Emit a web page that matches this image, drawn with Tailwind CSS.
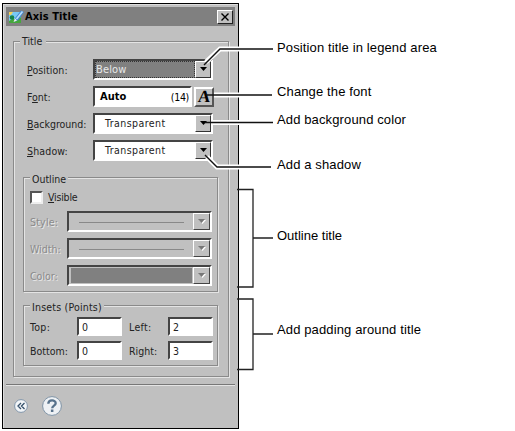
<!DOCTYPE html>
<html lang="en">
<head>
<meta charset="utf-8">
<title>Axis Title</title>
<script src="https://cdn.jsdelivr.net/npm/@tailwindcss/browser@4"></script>
</head>
<body class="bg-white">
<div class="relative flex h-[431px] w-[515px] overflow-hidden pt-[3px] pl-[2px]">
  <!-- dialog -->
  <section class="flex h-[426px] w-[237px] flex-col border border-black bg-[#c0c0c0] px-[3px] pt-[3px] font-['DejaVu_Sans_Condensed','DejaVu_Sans',sans-serif] text-[10.5px] leading-[14px] text-[#222] shadow-[inset_1px_1px_0_#ddd]">
    <header class="flex h-[19px] shrink-0 items-center bg-[#808080] pr-[2px] pl-[2px]">
      <svg class="h-4 w-4" viewBox="0 0 16 16">
        <rect x="1" y="3" width="12" height="11" fill="#79c8f5"/>
        <path d="M1 12 5 9.500 8 11 13 8V14H1z" fill="#45a83c"/>
        <circle cx="4" cy="8.500" r="2.300" fill="#168348"/><path d="M1 3h4l-2 3H1z" fill="#f3d35b"/>
        <path d="M6 13 7.500 8.500 13 1.500 16 3 10.500 11z" fill="#3f86d2"/><path d="M8.500 10 14.500 2.500" stroke="#b5dcfb" stroke-width="1.800"/><path d="m5.500 13 1.500-3.500 2 2z" fill="#f4f4e8"/>
      </svg>
      <h1 class="ml-[1px] text-[11px] font-bold tracking-[.1px] text-black">Axis Title</h1>
      <button class="ml-auto flex h-[14px] w-[16px] items-center justify-center border border-t-white border-r-[#222] border-b-[#222] border-l-white bg-[#c0c0c0]" aria-label="Close">
        <svg class="h-2 w-2" viewBox="0 0 8 8"><path d="M.5 .5 7.5 7.5M7.5 .5 .5 7.5" stroke="#000" stroke-width="1.4"/></svg>
      </button>
    </header>

    <div class="mt-[15px] ml-[7px] h-[336px] w-[216px] shrink-0 border border-[#8a8a8a] pl-[9px] shadow-[1px_1px_0_#e4e4e4,inset_1px_1px_0_#e4e4e4]">
      <h2 class="-mt-[8px] -ml-[3px] h-[14px] w-[26px] bg-[#c0c0c0] pl-[2px]">Title</h2>
      <div class="mt-[11px] flex flex-col gap-[6px] pl-[4px]">
        <div class="flex h-[21px] items-center">
          <label class="w-[66px] shrink-0 tracking-[.08px]"><u>P</u>osition:</label>
          <div class="flex h-[21px] w-[120px] border-2 border-t-[#444] border-r-white border-b-white border-l-[#444] bg-[#808080]">
            <span class="flex-1 border border-dotted border-[#333] text-[11px] leading-[16px] tracking-[.15px] text-[#e8e8e8]">Below</span>
            <span class="flex w-[16px] items-center justify-center border border-t-white border-r-[#333] border-b-[#333] border-l-white bg-[#c0c0c0] pb-px"><svg class="h-1 w-[7px]" viewBox="0 0 7 4"><path d="M0 0h7L3.5 4z"/></svg></span>
          </div>
        </div>
        <div class="flex h-[21px] items-center">
          <label class="w-[66px] shrink-0">F<u>o</u>nt:</label>
          <div class="flex h-[21px] w-[99px] items-center justify-between border-2 border-t-[#444] border-r-white border-b-white border-l-[#444] bg-white pr-px pl-[5px] text-black"><b class="text-[11px]">Auto</b><span class="tracking-[-.3px]">(14)</span></div>
          <button class="ml-[2px] flex h-[20px] w-[20px] items-center justify-center border-2 border-t-white border-r-[#555] border-b-[#555] border-l-white font-['Liberation_Serif',serif] text-[17px] leading-[16px] font-bold text-black"><span class="-skew-x-6">A</span></button>
        </div>
        <div class="flex h-[21px] items-center">
          <label class="w-[66px] shrink-0"><u>B</u>ackground:</label>
          <div class="flex h-[21px] w-[120px] border-2 border-t-[#444] border-r-white border-b-white border-l-[#444] bg-white">
            <span class="flex-1 pl-[10px] leading-[17px] tracking-[.45px]">Transparent</span>
            <span class="flex w-[16px] items-center justify-center border border-t-white border-r-[#333] border-b-[#333] border-l-white bg-[#c0c0c0] pb-px"><svg class="h-1 w-[7px]" viewBox="0 0 7 4"><path d="M0 0h7L3.5 4z"/></svg></span>
          </div>
        </div>
        <div class="flex h-[21px] items-center">
          <label class="w-[66px] shrink-0 tracking-[.15px]"><u>S</u>hadow:</label>
          <div class="flex h-[21px] w-[120px] border-2 border-t-[#444] border-r-white border-b-white border-l-[#444] bg-white">
            <span class="flex-1 pl-[10px] leading-[17px] tracking-[.45px]">Transparent</span>
            <span class="flex w-[16px] items-center justify-center border border-t-white border-r-[#333] border-b-[#333] border-l-white bg-[#c0c0c0] pb-px"><svg class="h-1 w-[7px]" viewBox="0 0 7 4"><path d="M0 0h7L3.5 4z"/></svg></span>
          </div>
        </div>
      </div>

      <div class="mt-[16px] h-[115px] w-[195px] border border-[#8a8a8a] pl-[6px] shadow-[1px_1px_0_#e4e4e4,inset_1px_1px_0_#e4e4e4]">
        <h3 class="-mt-[6px] h-[14px] w-[38px] bg-[#c0c0c0] pl-[2px]">Outline</h3>
        <div class="mt-[4px] flex h-[14px] items-center">
          <span class="h-[13px] w-[13px] border-2 border-t-[#555] border-r-[#eee] border-b-[#eee] border-l-[#555] bg-white"></span>
          <label class="ml-[5px] tracking-[-.2px]"><u>V</u>isible</label>
        </div>
        <div class="mt-[7px] flex flex-col gap-[6px] text-[#8a8a8a] [text-shadow:1px_1px_0_#e8e8e8]">
          <div class="flex h-[21px] items-center"><span class="w-[37px] shrink-0 tracking-[.2px]">Style:</span>
            <div class="flex h-[21px] w-[145px] items-stretch border-2 border-t-[#444] border-r-white border-b-white border-l-[#444]"><span class="mr-[9px] ml-[10px] h-[10px] flex-1 border-b border-[#888]"></span><span class="flex w-[17px] items-center justify-center border border-t-white border-r-[#444] border-b-[#444] border-l-white"><svg class="h-[5px] w-[8px]" viewBox="0 0 8 5"><path d="M1 1h7L4.5 5z" fill="#fff"/><path d="M0 0h7L3.5 4z" fill="#777"/></svg></span></div></div>
          <div class="flex h-[21px] items-center"><span class="w-[37px] shrink-0">Width:</span>
            <div class="flex h-[21px] w-[145px] items-stretch border-2 border-t-[#444] border-r-white border-b-white border-l-[#444]"><span class="mr-[9px] ml-[10px] h-[10px] flex-1 border-b border-[#888]"></span><span class="flex w-[17px] items-center justify-center border border-t-white border-r-[#444] border-b-[#444] border-l-white"><svg class="h-[5px] w-[8px]" viewBox="0 0 8 5"><path d="M1 1h7L4.5 5z" fill="#fff"/><path d="M0 0h7L3.5 4z" fill="#777"/></svg></span></div></div>
          <div class="flex h-[21px] items-center"><span class="w-[37px] shrink-0">Color:</span>
            <div class="flex h-[21px] w-[145px] items-stretch border-2 border-t-[#444] border-r-white border-b-white border-l-[#444]"><span class="my-px mr-px ml-[2px] flex-1 bg-[#808080]"></span><span class="flex w-[17px] items-center justify-center border border-t-white border-r-[#444] border-b-[#444] border-l-white"><svg class="h-[5px] w-[8px]" viewBox="0 0 8 5"><path d="M1 1h7L4.5 5z" fill="#fff"/><path d="M0 0h7L3.5 4z" fill="#777"/></svg></span></div></div>
        </div>
      </div>

      <div class="mt-[13px] h-[61px] w-[195px] border border-[#8a8a8a] pl-[6px] shadow-[1px_1px_0_#e4e4e4,inset_1px_1px_0_#e4e4e4]">
        <h3 class="-mt-[6px] h-[13px] w-[74px] bg-[#c0c0c0] pl-[2px] tracking-[.2px]">Insets (Points)</h3>
        <div class="mt-[4px] grid grid-cols-[47px_45px_46px_45px] items-center gap-y-[5px]">
          <label class="tracking-[.3px]">Top:</label><span class="h-[19px] border-2 border-t-[#444] border-r-white border-b-white border-l-[#444] bg-white pl-[3px] leading-[16px]">0</span>
          <label class="pl-[7px] tracking-[.3px]">Left:</label><span class="h-[19px] border-2 border-t-[#444] border-r-white border-b-white border-l-[#444] bg-white pl-[3px] leading-[16px]">2</span>
          <label>Bottom:</label><span class="h-[19px] border-2 border-t-[#444] border-r-white border-b-white border-l-[#444] bg-white pl-[3px] leading-[16px]">0</span>
          <label class="pl-[7px]">Right:</label><span class="h-[19px] border-2 border-t-[#444] border-r-white border-b-white border-l-[#444] bg-white pl-[3px] leading-[16px]">3</span>
        </div>
      </div>
    </div>

    <footer class="mt-[7px] flex h-[42px] shrink-0 items-center border-t border-[#777] pl-[8px] shadow-[inset_0_1px_0_#e4e4e4]">
      <svg class="h-[14px] w-[14px]" viewBox="0 0 14 14"><circle cx="7" cy="7" r="6.4" fill="#f2f5f8" stroke="#8195aa"/><path d="M7 4 4 7l3 3M10.5 4l-3 3 3 3" fill="none" stroke="#35506b" stroke-width="1.3"/></svg>
      <svg class="ml-[14px] h-[20px] w-[20px]" viewBox="0 0 20 20"><circle cx="10" cy="10" r="9.4" fill="#eef1f4" stroke="#7f93a6"/><path d="M6.3 7.8C6.3 3.4 13.7 3.3 13.7 7.3 13.7 9.6 10.2 9.6 10.2 12.2" fill="none" stroke="#58728b" stroke-width="2.3"/><rect x="8.9" y="13.5" width="2.5" height="2.5" fill="#58728b"/></svg>
    </footer>
  </section>

  <!-- callout labels -->
  <div class="ml-[38px] flex flex-col font-['Liberation_Sans',Arial,sans-serif] text-[13px] leading-[16px] tracking-[.13px] whitespace-nowrap text-black">
    <p class="mt-[37px]">Position title in legend area</p>
    <p class="mt-[28px]">Change the font</p>
    <p class="mt-[12px]">Add background color</p>
    <p class="mt-[29px]">Add a shadow</p>
    <p class="mt-[55px] tracking-[0px]">Outline title</p>
    <p class="mt-[78px]">Add padding around title</p>
  </div>

  <!-- leader lines and brackets drawn over the dialog -->
  <svg class="pointer-events-none absolute top-0 left-0 h-[431px] w-[515px]" viewBox="0 0 515 431" fill="none">
    <g stroke="#fff" stroke-width="5"><path d="M206 62 220 49H239"/><path d="M214 95H239"/><path d="M212 122.5H239"/><path d="M207 157 217 167H239"/></g>
    <g stroke="#111" stroke-width="1.4"><path d="M204 65 220 49H273"/><path d="M206 95H272"/><path d="M205 122.5H273"/><path d="M205 155 217 167H271"/></g>
    <g stroke="#222" stroke-width="1.3"><path d="M237 189.5H253V287H237M253 238H273"/><path d="M237 299H253V369.5H237M253 334H273"/></g>
  </svg>
</div>
</body>
</html>
